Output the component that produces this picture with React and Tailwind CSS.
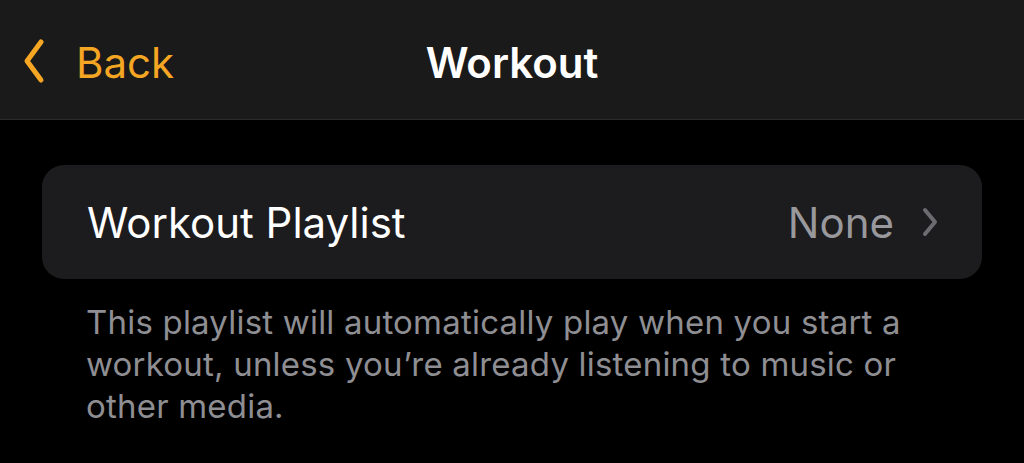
export default function App() {
  return (
    <div className="h-[463px] w-[1024px] overflow-hidden bg-black text-white [font-family:Inter,'Liberation_Sans',sans-serif]">
      {/* Nav bar */}
      <header className="relative flex h-[120px] items-center border-b border-[#2a2a2a] bg-[#1a1a1a] pt-[6px]">
        <button className="flex items-center gap-[31px] pl-[23px] text-[#f5a623]">
          <svg width="22" height="46" viewBox="0 0 22 46" fill="none" className="-mt-[4px]">
            <path
              d="M18 4 L4 23 L18 42"
              stroke="#f5a623"
              strokeWidth="5"
              strokeLinecap="round"
              strokeLinejoin="round"
            />
          </svg>
          <span className="text-[42px] leading-none">Back</span>
        </button>
        <h1 className="absolute left-1/2 -translate-x-1/2 text-[42px] font-semibold leading-none">
          Workout
        </h1>
      </header>

      {/* Settings group */}
      <div className="px-[42px] pt-[45px]">
        <div className="flex h-[114px] items-center justify-between rounded-[22px] bg-[#1c1c1e] pl-[45px] pr-[44px]">
          <span className="text-[42px]">Workout Playlist</span>
          <div className="flex items-center gap-[28px]">
            <span className="text-[42px] text-[#98989d]">None</span>
            <svg width="16" height="30" viewBox="0 0 16 30" fill="none">
              <path
                d="M3 3 L13 15 L3 27"
                stroke="#6c6c70"
                strokeWidth="4"
                strokeLinecap="round"
                strokeLinejoin="round"
              />
            </svg>
          </div>
        </div>
        <p className="mt-[22px] max-w-[910px] pl-[44px] text-[33px] tracking-[0.2px] leading-[42px] text-[#8e8e93]">
          This playlist will automatically play when you start a workout,
          unless you’re already listening to music or other media.
        </p>
      </div>
    </div>
  );
}
